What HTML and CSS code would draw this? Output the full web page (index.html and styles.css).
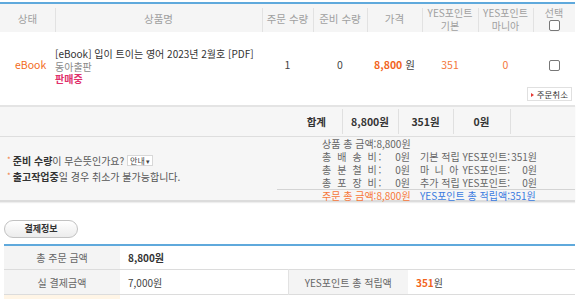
FILE: index.html
```html
<!DOCTYPE html>
<html lang="ko">
<head>
<meta charset="utf-8">
<title>주문 상세</title>
<link rel="stylesheet" href="styles.css">
</head>
<body>
<div class="order">
  <table class="items">
    <colgroup>
      <col class="w-status"><col class="w-name"><col class="w-qty"><col class="w-ready"><col class="w-price"><col class="w-pt"><col class="w-mania"><col class="w-sel">
    </colgroup>
    <thead>
      <tr>
        <th class="first">상태</th>
        <th>상품명</th>
        <th>주문 수량</th>
        <th>준비 수량</th>
        <th>가격</th>
        <th class="two">YES포인트<br>기본</th>
        <th class="two">YES포인트<br>마니아</th>
        <th class="two">선택<br><span class="chk"></span></th>
      </tr>
    </thead>
    <tbody>
      <tr class="item">
        <td class="status">eBook</td>
        <td class="name">
          <div class="title">[eBook] 입이 트이는 영어 2023년 2월호 [PDF]</div>
          <div class="pub">동아출판</div>
          <div class="sale">판매중</div>
        </td>
        <td>1</td>
        <td>0</td>
        <td><b class="orange">8,800</b> 원</td>
        <td class="pt">351</td>
        <td class="pt">0</td>
        <td><span class="chk"></span></td>
      </tr>
      <tr class="cancel-row">
        <td colspan="8"><span class="cancel"><i class="tri"></i>주문취소</span></td>
      </tr>
    </tbody>
  </table>

  <div class="totals">
    <table class="sum">
      <tr>
        <td class="sum-label">합계</td>
        <td class="sv">8,800원</td>
        <td class="sv">351원</td>
        <td class="sv">0원</td>
        <td class="sv"></td>
      </tr>
    </table>
    <div class="summary">
      <div class="notes">
        <p><i class="ast">*</i><b>준비 수량</b>이 무슨뜻인가요? <span class="guide">안내<i>▾</i></span></p>
        <p><i class="ast">*</i><b>출고작업중</b>일 경우 취소가 불가능합니다.</p>
      </div>
      <div class="breakdown">
        <div class="line"><span class="half a">상품 총 금액:8,800원</span></div>
        <div class="line"><span class="half a"><span class="sp">총 배 송 비:</span><span>0원</span></span><span class="half b"><span>기본 적립 YES포인트:</span><span>351원</span></span></div>
        <div class="line"><span class="half a"><span class="sp">총 분 철 비:</span><span>0원</span></span><span class="half b"><span><span class="sp2">마 니 아</span> YES포인트:</span><span>0원</span></span></div>
        <div class="line"><span class="half a"><span class="sp">총 포 장 비:</span><span>0원</span></span><span class="half b"><span>추가 적립 YES포인트:</span><span>0원</span></span></div>
        <div class="line final"><span class="half a orange-t">주문 총 금액:8,800원</span><span class="half b blue-t">YES포인트 총 적립액:351원</span></div>
      </div>
    </div>
  </div>
</div>

<div class="pay">
  <span class="pill">결제정보</span>
  <table class="pay-table">
    <colgroup><col class="pl"><col class="pv"><col class="pl2"><col class="pv2"></colgroup>
    <tr>
      <th>총 주문 금액</th>
      <td colspan="3"><b>8,800원</b></td>
    </tr>
    <tr>
      <th>실 결제금액</th>
      <td>7,000원</td>
      <th class="sep">YES포인트 총 적립액</th>
      <td><b class="orange">351</b>원</td>
    </tr>
    <tr class="more">
      <th></th><td colspan="3"></td>
    </tr>
  </table>
</div>
</body>
</html>
```

FILE: styles.css
```css
* { box-sizing: border-box; }
html, body { margin: 0; padding: 0; background: #fff; }
body {
  font-family: "Noto Sans CJK KR", "Noto Sans", sans-serif;
  font-size: 10px;
  color: #444;
  width: 580px;
  padding-top: 2px;
}
p { margin: 0; }
i { font-style: normal; }

.order { width: 575px; }

.items {
  width: 575px;
  border-collapse: collapse;
  table-layout: fixed;
  border-top: 2px solid #5fa9dc;
}
.w-status { width: 55px; }
.w-name { width: 207px; }
.w-qty { width: 51px; }
.w-ready { width: 54px; }
.w-price { width: 55px; }
.w-pt { width: 56px; }
.w-mania { width: 55px; }
.w-sel { width: 42px; }

.items thead th {
  height: 29px;
  padding: 1px 0 0;
  font-weight: normal;
  color: #a0a0a0;
  font-size: 10.5px;
  line-height: 13px;
  background: #f5f5f5 linear-gradient(#e2e2e2, #e2e2e2) left 4px / 1px 100% no-repeat;
  border-top: 1px solid #e6eef4;
  white-space: nowrap;
}
.items thead th.first { background: #f5f5f5; }
.items thead th.two { font-size: 10px; line-height: 13px; }
.items thead .chk { margin-top: 1px; vertical-align: top; }

.chk {
  display: inline-block;
  width: 11px;
  height: 11px;
  border: 1px solid #777;
  border-radius: 2px;
  background: #fff;
}

.item td {
  height: 54px;
  padding: 10px 0 0;
  text-align: center;
  vertical-align: middle;
  color: #444;
  font-size: 10.5px;
}
.item td.status { color: #f26b21; font-size: 10.5px; text-align: left; padding-left: 15px; }
.item td.name {
  text-align: left;
  padding-left: 0;
  padding-top: 16px;
  vertical-align: top;
  line-height: 12.5px;
  font-size: 10px;
}
.title { color: #333; white-space: nowrap; }
.pub { color: #8a8a8a; }
.sale { color: #e0306b; font-weight: bold; }
.orange { color: #f2641b; font-weight: bold; }
.item td.pt { color: #f4773a; }
.item .chk { vertical-align: middle; }

.cancel-row td { padding: 0 3px 4px 0; text-align: right; height: 17px; }
.cancel {
  display: inline-block;
  height: 14px;
  line-height: 12px;
  padding: 0 3px 0 3px;
  border: 1px solid #e0e0e0;
  background: #fff;
  color: #333;
  font-size: 8.5px;
}
.tri {
  display: inline-block;
  width: 0; height: 0;
  border-left: 3px solid #e53935;
  border-top: 2.5px solid transparent;
  border-bottom: 2.5px solid transparent;
  margin-right: 3px;
  vertical-align: 1px;
}

.totals {
  background: #f6f6f6;
  border-top: 2px solid #e4e4e4;
  border-bottom: 2px solid #dcdcdc;
  box-shadow: 0 1px 1px #eee;
}
.sum {
  width: 575px;
  border-collapse: collapse;
  table-layout: fixed;
  border-bottom: 1px solid #dedede;
}
.sum td {
  height: 29px;
  padding: 0;
  font-weight: bold;
  color: #333;
  font-size: 10.5px;
  text-align: center;
  background: linear-gradient(#e0e0e0, #e0e0e0) left 2px / 1px calc(100% - 4px) no-repeat;
}
.sum td.sum-label { width: 342px; text-align: right; padding-right: 16px; background: none; }
.sum td.sv { width: 56px; }
.sum td.sv:nth-child(3) { width: 55px; }
.sum td.sv:nth-child(4) { width: 57px; }
.sum td.sv:last-child { width: 65px; }

.summary {
  display: flex;
  align-items: center;
  height: 63px;
}
.notes {
  width: 277px;
  padding-left: 7px;
  line-height: 15px;
  color: #555;
  font-size: 10px;
  padding-top: 0;
}
.notes b { color: #333; }
.ast { color: #f08040; font-size: 8px; vertical-align: 2px; margin-right: 2px; }
.guide {
  display: inline-block;
  height: 11px;
  line-height: 9px;
  padding: 0 2px;
  border: 1px solid #d8d8d8;
  background: #fff;
  font-size: 8px;
  color: #444;
  vertical-align: 1px;
}
.guide i { font-size: 7px; margin-left: 1px; }

.breakdown {
  width: 298px;
  align-self: stretch;
  color: #666;
  font-size: 10px;
}
.line {
  display: flex;
  padding-left: 45px;
  line-height: 13px;
  height: 13px;
}
.half { display: flex; justify-content: space-between; white-space: nowrap; }
.half.a { width: 88px; }
.half.b { width: 117px; margin-left: 10px; }
.sp { letter-spacing: 1.6px; }
.sp2 { letter-spacing: 1.3px; }
.line.final {
  border-top: 1px solid #d4d4d4;
  height: 11px;
  line-height: 11px;
  margin-top: 0;
}
.orange-t { color: #f7783a; }
.blue-t { color: #3b7be0; }

.pay { padding: 18px 0 0 4px; }
.pill {
  display: block;
  width: 74px;
  height: 18px;
  line-height: 16px;
  text-align: center;
  border: 1px solid #c2c2c2;
  border-radius: 9px;
  background: linear-gradient(#ffffff, #ececec);
  color: #333;
  font-weight: bold;
  font-size: 9px;
}
.pay-table {
  margin-top: 6px;
  width: 571px;
  border-collapse: collapse;
  table-layout: fixed;
  border-top: 2px solid #5fa9dc;
}
.pl { width: 116px; }
.pv { width: 168px; }
.pl2 { width: 120px; }
.pv2 { width: 167px; }
.pay-table tr { border-bottom: 1px solid #dcdcdc; }
.pay-table th {
  height: 25px;
  background: #f4f4f4;
  font-weight: normal;
  color: #666;
  font-size: 10px;
}
.pay-table th.sep { border-left: 1px solid #e2e2e2; }
.pay-table td {
  padding-left: 8px;
  color: #444;
  font-size: 10px;
}
.pay-table td b { color: #333; }
.pay-table td b.orange { color: #f2641b; }
.pay-table tr:first-child th { border-top: 1px solid #fff; }
.pay-table tr.more th { background: #fff5e6; height: 4px; }
.pay-table tr.more td { height: 4px; }
.pay-table tr.more { border-bottom: none; }
```
